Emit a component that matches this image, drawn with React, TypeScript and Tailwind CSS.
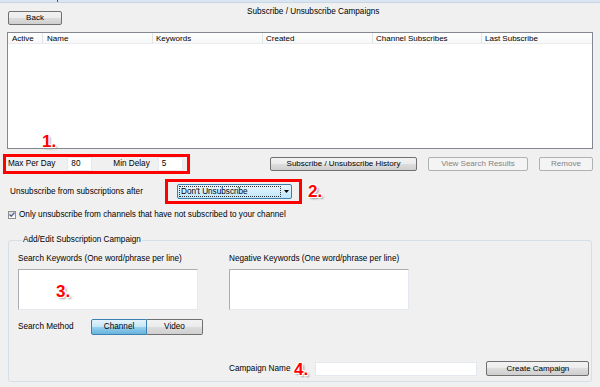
import React from "react"

const btn =
  "h-[14px] border border-[#707070] rounded-[2px] bg-[linear-gradient(#f2f2f2,#ebebeb_50%,#dddddd_50%,#cfcfcf)] flex items-center justify-center text-[8px] text-black"
const btnOff =
  "h-[14px] border border-[#adb2b5] rounded-[2px] bg-[#f4f4f4] flex items-center justify-center text-[8px] text-[#838383]"
const num =
  "absolute text-[17px] font-bold text-[#ff0000] leading-none [text-shadow:1px_1px_0_#fff,-1px_-1px_0_#fff,1px_-1px_0_#fff,-1px_1px_0_#fff,2px_2px_2px_#999]"

export default function App() {
  return (
    <div className="relative w-[600px] h-[387px] overflow-hidden bg-[#f0f0f0] text-[8.2px] leading-[10px] text-black font-['Liberation_Sans',Arial,sans-serif]">
      <div className="h-[3px] bg-[#dae5f2] border-b border-[#c9d6e6] relative">
        <span className="absolute left-[57px] top-0 w-[1px] h-[2px] bg-[#555]" />
      </div>

      <div className="flex items-start">
        <button className={btn + " ml-[8px] mt-[8px] w-[54px]"}>Back</button>
        <div className="ml-[185px] mt-[4px]">Subscribe / Unsubscribe Campaigns</div>
      </div>

      {/* list */}
      <div className="ml-[7px] mt-[7px] w-[586px] h-[117px] border border-[#828790] bg-white">
        <div className="flex h-[11px] border-b border-[#ececec] bg-[linear-gradient(#fff,#f6f7f8)] text-[8px] leading-[11px]">
          <div className="w-[35px] pl-[4px] border-r border-[#e2e3e6]">Active</div>
          <div className="w-[110px] pl-[4px] border-r border-[#e2e3e6]">Name</div>
          <div className="w-[110px] pl-[3px] border-r border-[#e2e3e6]">Keywords</div>
          <div className="w-[110px] pl-[3px] border-r border-[#e2e3e6]">Created</div>
          <div className="w-[109px] pl-[3px] border-r border-[#e2e3e6]">Channel Subscribes</div>
          <div className="flex-1 pl-[3px]">Last Subscribe</div>
        </div>
      </div>

      {/* max per day row */}
      <div className="flex items-center mt-[5px] h-[20px]">
        <div className="ml-[3px] w-[187px] h-[20px] border-[3px] border-[#ff0000] flex items-center">
          <span className="ml-[2px]">Max Per Day</span>
          <div className="ml-[12px] w-[25px] h-[14px] bg-white border border-[#e3e9ef] pl-[3px] leading-[12px]">80</div>
          <span className="ml-[21px]">Min Delay</span>
          <div className="ml-[8px] w-[25px] h-[14px] bg-white border border-[#e3e9ef] pl-[3px] leading-[12px]">5</div>
        </div>
        <button className={btn + " ml-[80px] w-[147px]"}>Subscribe / Unsubscribe History</button>
        <button className={btnOff + " ml-[11px] w-[100px]"}>View Search Results</button>
        <button className={btnOff + " ml-[11px] w-[54px]"}>Remove</button>
      </div>

      {/* unsubscribe after */}
      <div className="flex items-center mt-[5px] h-[25px]">
        <span className="ml-[10px] w-[155px]">Unsubscribe from subscriptions after</span>
        <div className="w-[137px] h-[25px] border-[3px] border-[#ff0000] flex items-center">
          <div className="ml-[9px] w-[115px] h-[15px] border border-[#3c7fb1] rounded-[2px] bg-[linear-gradient(#eaf6fd,#bee6fd)] flex items-center">
            <div className="ml-[1px] w-[102px] h-[11px] border border-dotted border-[#333] leading-[9px] pl-[1px]">
              Don't Unsubscribe
            </div>
            <div className="flex-1 flex justify-center">
              <svg width="5" height="3" viewBox="0 0 5 3">
                <path d="M0 0h5L2.5 3z" fill="#000" />
              </svg>
            </div>
          </div>
        </div>
      </div>

      {/* checkbox */}
      <div className="flex items-center mt-[6px] h-[9px]">
        <div className="ml-[8px] w-[8px] h-[8px] border border-[#8e8f8f] bg-[linear-gradient(#dcdcdc,#fff)] flex items-center justify-center">
          <svg width="6" height="5" viewBox="0 0 6 5">
            <path d="M0.5 2.5L2.2 4.2L5.5 0.6" stroke="#4a5f97" strokeWidth="1.3" fill="none" />
          </svg>
        </div>
        <span className="ml-[3px]">Only unsubscribe from channels that have not subscribed to your channel</span>
      </div>

      {/* group */}
      <fieldset className="ml-[8px] mt-[16px] w-[584px] h-[147px] border border-[#d5dfe5] rounded-[3px] pl-[9px]">
        <legend className="ml-[4px] px-[1px]">Add/Edit Subscription Campaign</legend>
        <div className="flex mt-[9px]">
          <div className="w-[211px]">
            <div>Search Keywords (One word/phrase per line)</div>
            <div className="mt-[5px] w-[180px] h-[41px] bg-white border border-[#e3e9ef] border-t-[#abadb3] border-l-[#abadb3]" />
          </div>
          <div>
            <div>Negative Keywords (One word/phrase per line)</div>
            <div className="mt-[5px] w-[180px] h-[41px] bg-white border border-[#e3e9ef] border-t-[#abadb3] border-l-[#abadb3]" />
          </div>
        </div>
        <div className="flex items-center mt-[9px]">
          <span className="w-[73px]">Search Method</span>
          <div className="flex h-[16px]">
            <div className="w-[56px] border border-[#3c7fb1] rounded-l-[2px] bg-[linear-gradient(#e5f4fc,#c4e5f6_50%,#98d1ef_50%,#68b3db)] flex items-center justify-center">
              Channel
            </div>
            <div className="w-[56px] border border-l-0 border-[#707070] rounded-r-[2px] bg-[linear-gradient(#f2f2f2,#ebebeb_50%,#dddddd_50%,#cfcfcf)] flex items-center justify-center">
              Video
            </div>
          </div>
        </div>
        <div className="flex items-center mt-[26px] h-[15px]">
          <span className="ml-[211px]">Campaign Name</span>
          <div className="ml-[25px] w-[162px] h-[14px] bg-white border border-[#e3e9ef]" />
          <button className={btn + " ml-[9px] w-[103px] h-[15px]"}>Create Campaign</button>
        </div>
      </fieldset>

      <span className={num + " left-[42px] top-[133px]"}>1.</span>
      <span className={num + " left-[308px] top-[183px]"}>2.</span>
      <span className={num + " left-[56px] top-[283px]"}>3.</span>
      <span className={num + " left-[294px] top-[361px]"}>4.</span>
    </div>
  )
}
